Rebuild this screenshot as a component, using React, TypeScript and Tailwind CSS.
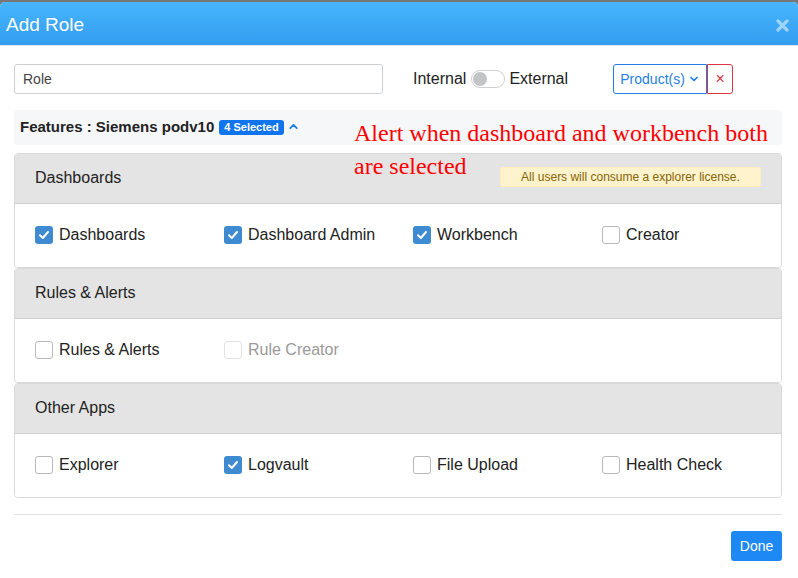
import { ChevronDown, ChevronUp } from "lucide-react";

type Item = { label: string; checked?: boolean; disabled?: boolean };

const sections: { title: string; alert?: string; items: Item[] }[] = [
  {
    title: "Dashboards",
    alert: "All users will consume a explorer license.",
    items: [
      { label: "Dashboards", checked: true },
      { label: "Dashboard Admin", checked: true },
      { label: "Workbench", checked: true },
      { label: "Creator" },
    ],
  },
  {
    title: "Rules & Alerts",
    items: [{ label: "Rules & Alerts" }, { label: "Rule Creator", disabled: true }],
  },
  {
    title: "Other Apps",
    items: [
      { label: "Explorer" },
      { label: "Logvault", checked: true },
      { label: "File Upload" },
      { label: "Health Check" },
    ],
  },
];

function Check({ checked, disabled }: { checked?: boolean; disabled?: boolean }) {
  if (checked) {
    return (
      <span className="flex h-[18px] w-[18px] items-center justify-center rounded-[3px] bg-[#3f8bd2]">
        <svg width="12" height="12" viewBox="0 0 12 12" fill="none">
          <path d="M2 6.2 4.8 9 10 3" stroke="white" strokeWidth="2" strokeLinecap="round" strokeLinejoin="round" />
        </svg>
      </span>
    );
  }
  return (
    <span
      className={
        disabled
          ? "h-[18px] w-[18px] rounded-[3px] border border-[#e2e2e2] bg-white"
          : "h-[18px] w-[18px] rounded-[3px] border border-[#b9b9b9] bg-white"
      }
    />
  );
}

function Section({ title, alert, items }: { title: string; alert?: string; items: Item[] }) {
  return (
    <div className="rounded-[4px] border border-[#d9d9d9] overflow-hidden">
      <div className="flex h-[50px] items-center justify-between border-b border-[#cfcfcf] bg-[#e4e4e4] pl-5 pr-5 pb-[1px]">
        <span className="text-[16px] text-[#222]">{title}</span>
        {alert && (
          <span className="mt-[-2px] flex h-[20px] w-[261px] items-center justify-center rounded-[3px] border border-[#ffeeba] bg-[#fff3cd] text-[12px] text-[#856404]">
            {alert}
          </span>
        )}
      </div>
      <div className="grid h-[63px] grid-cols-[189px_189px_189px_189px] items-center px-5 pb-[1px] bg-white">
        {items.map((it) => (
          <label key={it.label} className="flex items-center gap-[6px]">
            <Check checked={it.checked} disabled={it.disabled} />
            <span className={it.disabled ? "text-[16px] text-[#9a9a9a]" : "text-[16px] text-[#222]"}>
              {it.label}
            </span>
          </label>
        ))}
      </div>
    </div>
  );
}

export default function App() {
  return (
    <div
      className="relative h-[578px] w-[798px] overflow-hidden bg-[#777] pt-[2px]"
      style={{ fontFamily: '"Liberation Sans", Arial, sans-serif' }}
    >
      <div className="h-[576px] rounded-t-[5px] bg-white">
        {/* Header */}
        <div className="flex h-[44px] items-center justify-between rounded-t-[5px] border-b border-[#dfe6ee] bg-gradient-to-b from-[#47b6fd] to-[#329cef] pl-[6px] pr-[9px] pt-[3px]">
          <h1 className="text-[19px] text-white">Add Role</h1>
          <svg width="13" height="13" viewBox="0 0 13 13" className="opacity-50">
            <path d="M2 2 11 11M11 2 2 11" stroke="white" strokeWidth="3.2" strokeLinecap="round" />
          </svg>
        </div>

        <div className="pl-[14px] pr-[16px]">
          {/* Top controls */}
          <div className="mt-[18px] flex h-[30px] items-center">
            <div className="flex h-[30px] w-[369px] items-center rounded-[3px] border border-[#ccd0d5] px-[8px] text-[14px] text-[#444]">
              Role
            </div>
            <span className="ml-[30px] text-[16px] text-[#222]">Internal</span>
            <span className="ml-[5px] flex h-[18px] w-[34px] items-center rounded-full border border-[#cfcfcf] bg-white pl-[1px]">
              <span className="h-[14px] w-[14px] rounded-full bg-[#c3c4c6]" />
            </span>
            <span className="ml-[4px] text-[16px] text-[#222]">External</span>
            <div className="ml-[45px] flex h-[30px]">
              <button className="flex h-[30px] w-[94px] items-center justify-center gap-[3px] rounded-l-[3px] border border-[#1f7fe6] text-[14px] text-[#1f7fe6]">
                Product(s)
                <ChevronDown size={12} strokeWidth={3.5} />
              </button>
              <button className="flex h-[30px] w-[26px] items-center justify-center rounded-r-[3px] border border-[#dc3545] text-[16px] text-[#dc3545]">
                ×
              </button>
            </div>
          </div>

          {/* Features bar */}
          <div className="mt-[16px] flex h-[35px] items-center rounded-[4px] bg-[#f6f7f9] pl-[6px]">
            <span className="text-[15px] font-bold text-[#222]">Features : Siemens podv10</span>
            <span className="ml-[5px] flex h-[15px] items-center rounded-[3px] bg-[#0f75ee] px-[5px] text-[11px] font-bold text-white">
              4 Selected
            </span>
            <ChevronUp size={13} strokeWidth={3.5} className="ml-[3px] mt-[-3px] text-[#1f7fe6]" />
          </div>

          {/* Sections */}
          <div className="mt-[8px]">
            {sections.map((s) => (
              <Section key={s.title} {...s} />
            ))}
          </div>

          <div className="mt-[16px] border-t border-[#e3e3e3]" />

          <div className="mt-[16px] flex justify-end">
            <button className="h-[30px] w-[51px] rounded-[3px] bg-[#1e88f5] text-[14px] text-white">Done</button>
          </div>
        </div>
      </div>

      {/* Annotation overlay */}
      <p
        className="absolute left-[354px] top-[117px] w-[430px] text-[24px] leading-[33px] text-[#ff0000]"
        style={{ fontFamily: '"Liberation Serif", "Times New Roman", serif' }}
      >
        Alert when dashboard and workbench both are selected
      </p>
    </div>
  );
}
